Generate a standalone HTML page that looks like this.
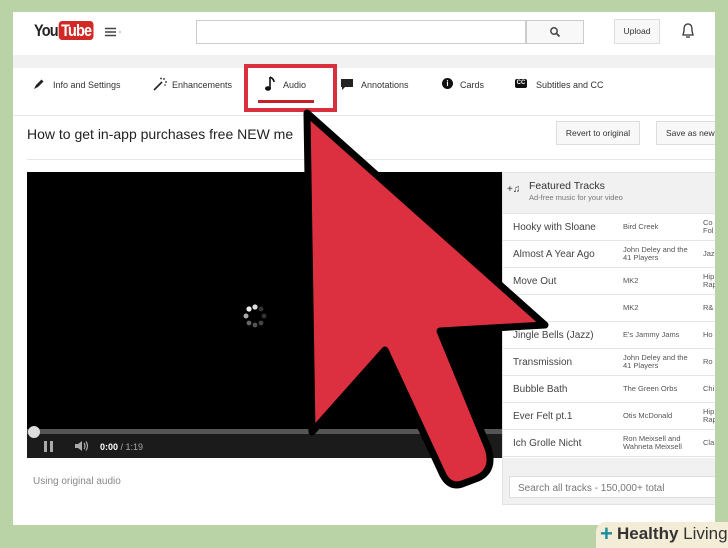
<!DOCTYPE html>
<html><head><meta charset="utf-8"><style>
*{margin:0;padding:0;box-sizing:border-box}
body{width:728px;height:546px;background:#bad3a6;position:relative;overflow:hidden;font-family:"Liberation Sans",sans-serif;color:#333}
.p{position:absolute}
#panel{position:absolute;left:13px;top:12px;width:702px;height:513px;background:#fff;overflow:hidden}
.tab{position:absolute;top:68px;font-size:9px;color:#333}
.row{position:absolute;left:0;width:220px;height:27px;border-top:1px solid #e4e4e4}
.row .t{position:absolute;left:10px;top:8px;font-size:10px;color:#444}
.row .a{position:absolute;left:120px;font-size:7.5px;color:#555;line-height:8px}
.row .g{position:absolute;left:200px;font-size:7.5px;color:#555;line-height:8px}
</style></head><body>
<div id="panel">
 <div class="p" style="left:21px;top:9px;font-size:17px;font-weight:bold;letter-spacing:-1px;color:#222;transform:scaleX(.85);transform-origin:left">You<span style="background:#d12a26;color:#fff;border-radius:4px;padding:0 3px;margin-left:1px">Tube</span></div>
 <svg class="p" style="left:91px;top:15px" width="20" height="10"><path d="M1 1.5H12M1 5H12M1 8.5H12" stroke="#444" stroke-width="1.6"/><path d="M15 5h2" stroke="#999"/></svg>
 <div class="p" style="left:183px;top:8px;width:330px;height:24px;border:1px solid #ccc;background:#fff"></div>
 <div class="p" style="left:513px;top:8px;width:58px;height:24px;border:1px solid #ccc;background:#f8f8f8"></div>
 <svg class="p" style="left:536px;top:14px" width="12" height="12"><circle cx="5" cy="5" r="3.2" fill="none" stroke="#444" stroke-width="1.5"/><path d="M7.5 7.5L10.5 10.5" stroke="#444" stroke-width="1.8"/></svg>
 <div class="p" style="left:601px;top:7px;width:46px;height:25px;border:1px solid #ddd;background:#f8f8f8;font-size:8.5px;text-align:center;line-height:23px;color:#333">Upload</div>
 <svg class="p" style="left:667px;top:10px" width="16" height="18"><path d="M8 2 C4 2 4 6 4 9 L3 13 L13 13 L12 9 C12 6 12 2 8 2Z M6 15 L10 15" fill="none" stroke="#333" stroke-width="1.3"/></svg>
 <div class="p" style="left:0;top:43px;width:702px;height:13px;background:#f1f1f1"></div>
 <svg class="p" style="left:20px;top:66px" width="12" height="12"><path d="M1 11L3 7L8.5 1.5L10.5 3.5L5 9Z" fill="#222"/></svg>
 <div class="tab" style="left:40px">Info and Settings</div>
 <svg class="p" style="left:140px;top:65px" width="14" height="14"><path d="M1 13L9 5" stroke="#222" stroke-width="1.6"/><circle cx="11" cy="2" r=".9" fill="#222"/><circle cx="13" cy="5" r=".9" fill="#222"/><circle cx="8" cy="1.5" r=".9" fill="#222"/><circle cx="12" cy="8" r=".8" fill="#222"/></svg>
 <div class="tab" style="left:159px">Enhancements</div>
 <svg class="p" style="left:251px;top:64px" width="12" height="16"><path d="M6 1V12" stroke="#111" stroke-width="1.6"/><ellipse cx="4" cy="12.5" rx="3" ry="2.3" fill="#111"/><path d="M6 1Q10 3 10 6" fill="none" stroke="#111" stroke-width="1.6"/></svg>
 <div class="tab" style="left:270px">Audio</div>
 <div class="p" style="left:231px;top:52px;width:93px;height:48px;border:4px solid #d93040"></div>
 <div class="p" style="left:245px;top:88px;width:56px;height:3px;background:#c8202a"></div>
 <svg class="p" style="left:328px;top:67px" width="12" height="11"><path d="M0 0H12V8H4L1 11V8H0Z" fill="#222"/></svg>
 <div class="tab" style="left:348px">Annotations</div>
 <div class="p" style="left:429px;top:66px;width:11px;height:11px;border-radius:50%;background:#111;color:#fff;font-size:8px;text-align:center;line-height:11px;font-weight:bold">i</div>
 <div class="tab" style="left:447px">Cards</div>
 <div class="p" style="left:502px;top:67px;width:12px;height:9px;border-radius:2px;background:#111;color:#fff;font-size:6px;text-align:center;line-height:9px;font-weight:bold">CC</div>
 <div class="tab" style="left:523px">Subtitles and CC</div>
 <div class="p" style="left:0;top:103px;width:702px;height:1px;background:#e6e6e6"></div>
 <div class="p" style="left:14px;top:114px;font-size:14px;color:#222">How to get in-app purchases free NEW me</div>
 <div class="p" style="left:543px;top:109px;width:84px;height:24px;border:1px solid #ddd;background:#f8f8f8;font-size:8.5px;text-align:center;line-height:22px">Revert to original</div>
 <div class="p" style="left:643px;top:109px;width:70px;height:24px;border:1px solid #ddd;background:#f8f8f8;font-size:8.5px;line-height:22px;padding-left:9px;white-space:nowrap">Save as new</div>
 <div class="p" style="left:14px;top:147px;width:688px;height:1px;background:#e6e6e6"></div>
 <div class="p" style="left:14px;top:160px;width:475px;height:286px;background:#000"></div>
 <svg class="p" style="left:228px;top:290px" width="28" height="28">
  <g fill="#666"><circle cx="14" cy="5" r="2.6" fill="#ddd"/><circle cx="20" cy="7" r="2.4" fill="#333"/><circle cx="23" cy="14" r="2.4" fill="#333"/><circle cx="20" cy="21" r="2.4" fill="#444"/><circle cx="14" cy="23" r="2.4" fill="#555"/><circle cx="8" cy="21" r="2.4"/><circle cx="5" cy="14" r="2.5" fill="#aaa"/><circle cx="8" cy="7" r="2.6" fill="#eee"/></g></svg>
 <div class="p" style="left:14px;top:418px;width:475px;height:28px;background:#1b1b1b"></div>
 <div class="p" style="left:14px;top:417px;width:475px;height:5px;background:#555"></div>
 <div class="p" style="left:15px;top:414px;width:12px;height:12px;border-radius:50%;background:#ddd"></div>
 <div class="p" style="left:31px;top:429px;width:3px;height:11px;background:#aaa"></div>
 <div class="p" style="left:37px;top:429px;width:3px;height:11px;background:#aaa"></div>
 <svg class="p" style="left:61px;top:428px" width="16" height="12"><path d="M1 4H4L8 1V11L4 8H1Z" fill="#aaa"/><path d="M10 3Q12 6 10 9M12 1.5Q15 6 12 10.5" fill="none" stroke="#aaa" stroke-width="1.2"/></svg>
 <div class="p" style="left:87px;top:430px;font-size:9px;color:#fff"><b>0:00</b><span style="color:#aaa"> / 1:19</span></div>
 <div class="p" style="left:20px;top:464px;font-size:10px;color:#888">Using original audio</div>
 <div class="p" style="left:489px;top:160px;width:220px;height:333px;background:#f1f1f1;border:1px solid #e2e2e2"></div>
 <div class="p" style="left:494px;top:172px;font-size:10px;color:#333">+&#9835;</div>
 <div class="p" style="left:516px;top:168px;font-size:10.5px;color:#333">Featured Tracks</div>
 <div class="p" style="left:516px;top:181px;font-size:7.5px;color:#777">Ad-free music for your video</div>
 <div class="p" style="left:490px;top:201px;width:220px;height:245px;background:#fff">
  <div class="row" style="top:0"><div class="t">Hooky with Sloane</div><div class="a" style="top:9px">Bird Creek</div><div class="g" style="top:5px">Co<br>Fol</div></div>
  <div class="row" style="top:27px"><div class="t">Almost A Year Ago</div><div class="a" style="top:5px">John Deley and the<br>41 Players</div><div class="g" style="top:9px">Jaz</div></div>
  <div class="row" style="top:54px"><div class="t">Move Out</div><div class="a" style="top:9px">MK2</div><div class="g" style="top:5px">Hip<br>Rap</div></div>
  <div class="row" style="top:81px"><div class="t"></div><div class="a" style="top:9px">MK2</div><div class="g" style="top:9px">R&amp;</div></div>
  <div class="row" style="top:108px"><div class="t">Jingle Bells (Jazz)</div><div class="a" style="top:9px">E's Jammy Jams</div><div class="g" style="top:9px">Ho</div></div>
  <div class="row" style="top:135px"><div class="t">Transmission</div><div class="a" style="top:5px">John Deley and the<br>41 Players</div><div class="g" style="top:9px">Ro</div></div>
  <div class="row" style="top:162px"><div class="t">Bubble Bath</div><div class="a" style="top:9px">The Green Orbs</div><div class="g" style="top:9px">Chi</div></div>
  <div class="row" style="top:189px"><div class="t">Ever Felt pt.1</div><div class="a" style="top:9px">Otis McDonald</div><div class="g" style="top:5px">Hip<br>Rap</div></div>
  <div class="row" style="top:216px;border-bottom:1px solid #e4e4e4;height:28px"><div class="t">Ich Grolle Nicht</div><div class="a" style="top:5px">Ron Meixsell and<br>Wahneta Meixsell</div><div class="g" style="top:9px">Cla</div></div>
 </div>
 <div class="p" style="left:496px;top:464px;width:210px;height:22px;border:1px solid #ddd;background:#fff;font-size:10px;color:#777;padding:6px 0 0 8px">Search all tracks - 150,000+ total</div>
</div>
<svg class="p" style="left:0;top:0" width="728" height="546">
 <path d="M307 113 L545 325 L440 331 L488 448 Q495 470 478 478 L462 484 Q450 488 443 475 L385 350 L312 432 Z" fill="#dc3040" stroke="#000" stroke-width="7" stroke-linejoin="round"/>
</svg>
<div class="p" style="left:596px;top:522px;width:140px;height:26px;background:#f3ecd6;border-radius:10px 0 0 0"></div>
<div class="p" style="left:600px;top:521px;font-size:22px;font-weight:bold;color:#1a8d9e">+</div>
<div class="p" style="left:617px;top:524px;font-size:17px;color:#333;white-space:nowrap"><b>Healthy</b> Living</div>
</body></html>
